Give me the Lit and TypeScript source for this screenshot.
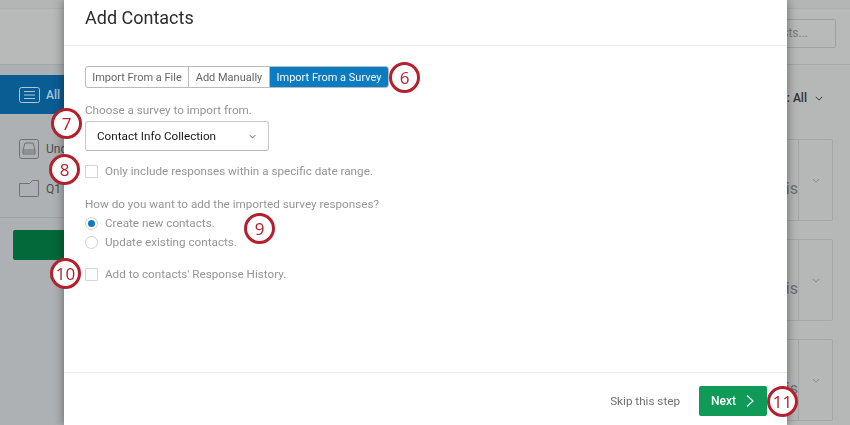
import { LitElement, html, css } from "lit";
import { customElement } from "lit/decorators.js";

const chevron = (cls: string) => html`<svg class=${cls} viewBox="0 0 10 6" fill="none" stroke="currentColor" stroke-width="1.2"><path d="M1 1l4 4 4-4"/></svg>`;

@customElement("app-root")
export class AppRoot extends LitElement {
  static styles = css`
    :host { display: block; width: 850px; height: 425px; position: relative; overflow: hidden; font-family: Roboto, "Liberation Sans", sans-serif; background: #b6b7b7; }
    .shot { width: 850px; height: 425px; position: relative; filter: blur(0.4px); }
    .page { width: 850px; height: 425px; display: flex; flex-direction: column; }
    .topstrip { height: 8px; border-bottom: 1px solid #adaeae; background: #b4b5b5; flex: none; }
    .toolbar { height: 55px; border-bottom: 1px solid #a6a7a7; flex: none; display: flex; justify-content: flex-end; align-items: center; padding-right: 14px; background: #b8b9b9; }
    .search { height: 29px; border: 1px solid #a0a1a1; border-radius: 2px; font-size: 12px; color: #7d7e7e; display: flex; align-items: center; justify-content: flex-end; padding-right: 27px; box-sizing: border-box; width: 148px; margin-bottom: 7px; }
    .main { flex: 1; display: flex; min-height: 0; }
    .side { width: 190px; background: #aeb1b3; flex: none; padding-top: 10px; box-sizing: border-box; display: flex; flex-direction: column; }
    .active { height: 39px; background: #0a5d92; color: #a9c7dc; display: flex; align-items: center; gap: 6px; padding-left: 19px; font-size: 12px; font-weight: 500; }
    .item { display: flex; align-items: center; gap: 7px; padding-left: 19px; font-size: 12px; color: #4a4b4b; height: 21px; }
    .item.first { margin-top: 24px; }
    .item.second { margin-top: 19px; }
    .sep { height: 1px; background: #9fa2a3; margin-top: 18px; }
    .newbtn { height: 30px; margin: 12px 0 0 13px; background: #04693a; border-radius: 2px; }
    .content { flex: 1; background: #b6b7b7; display: flex; flex-direction: column; align-items: flex-end; padding-right: 17px; box-sizing: border-box; }
    .filter { height: 26px; margin-top: 20px; display: flex; align-items: center; gap: 8px; font-size: 12px; font-weight: 500; color: #2f3030; margin-right: 10px; }
    .fchev { width: 8px; height: 5px; color: #333; }
    .card { width: 170px; height: 82px; flex: none; border: 1px solid #a5a6a6; border-radius: 2px; display: flex; justify-content: flex-end; box-sizing: border-box; }
    .cards { display: flex; flex-direction: column; gap: 18px; margin-top: 16px; padding-top: 12px; }
    .lis { align-self: center; font-size: 16px; color: #6e6f6f; margin: 17px 0 0 0; }
    .cell { width: 34px; border-left: 1px solid #a5a6a6; display: flex; justify-content: center; padding-top: 38px; box-sizing: border-box; }
    .cchev { width: 8px; height: 5px; color: #858686; }

    .modal { position: absolute; left: 64px; top: 0; width: 723px; height: 425px; background: #fff; box-shadow: 0 0 10px rgba(0,0,0,.45); display: flex; flex-direction: column; color: #8f9192; }
    header { flex: none; border-bottom: 1px solid #e8e9e9; padding: 0 0 10px 21px; display: flex; align-items: center; font-size: 18px; color: #2b2c2d; box-sizing: content-box; height: 35px; }
    .body { flex: 1; padding: 20px 21px 0; font-size: 11.7px; display: flex; flex-direction: column; align-items: flex-start; }
    .tabs { display: flex; height: 22px; border: 1px solid #b9bbbc; border-radius: 3px; box-sizing: border-box; font-size: 11px; color: #636566; overflow: hidden; }
    .tab { display: flex; align-items: center; justify-content: center; border-right: 1px solid #b9bbbc; box-sizing: border-box; padding-top: 1px; }
    .t1 { width: 103px; } .t2 { width: 81px; } .t3 { width: 118px; }
    .tab.on { background: #0b7cc2; color: #f2f8fc; border-right: 0; }
    .label { margin-top: 15px; height: 14px; line-height: 14px; color: #939596; }
    .select { margin-top: 4px; width: 184px; height: 30px; border: 1px solid #c6c8c9; border-bottom-color: #b5b7b8; border-radius: 3px; box-sizing: border-box; display: flex; align-items: center; justify-content: space-between; padding: 0 11px; color: #161718; font-size: 11.7px; }
    .schev { width: 7px; height: 5px; color: #444; margin-right: 1px; }
    .check { display: flex; align-items: center; gap: 7px; height: 14px; color: #939596; }
    .box { width: 13px; height: 13px; border: 1px solid #d4d5d6; box-sizing: border-box; border-radius: 1px; flex: none; }
    .c1 { margin-top: 13px; }
    .q { margin-top: 19px; height: 14px; line-height: 14px; color: #939596; }
    .radio { display: flex; align-items: center; gap: 7px; height: 14px; color: #939596; margin-top: 5px; }
    .dot { width: 13px; height: 13px; border-radius: 50%; border: 1px solid #d0d1d2; box-sizing: border-box; flex: none; display: flex; align-items: center; justify-content: center; }
    .dot i { width: 7px; height: 7px; border-radius: 50%; background: #0b7cc2; display: block; }
    .c2 { margin-top: 18px; }
    footer { height: 53px; padding-top: 4px; box-sizing: border-box; flex: none; border-top: 1px solid #e8e9e9; display: flex; align-items: center; justify-content: flex-end; padding-right: 20px; gap: 19px; font-size: 11.7px; color: #6e7071; }
    .next { width: 68px; height: 30px; background: #0f9b57; color: #fff; border-radius: 2px; display: flex; align-items: center; padding-left: 12px; gap: 10px; box-sizing: border-box; font-weight: 500; font-size: 12px; }
    .next svg { width: 8px; height: 12px; }

    .badge { position: absolute; width: 31px; height: 31px; border: 3px solid #b4202e; border-radius: 50%; background: #fff; color: #b4202e; display: flex; align-items: center; justify-content: center; font-size: 17px; box-sizing: border-box; font-family: "Open Sans", sans-serif; }
  `;

  render() {
    return html`
      <div class="shot">
      <div class="page">
        <div class="topstrip"></div>
        <div class="toolbar"><div class="search">sts...</div></div>
        <div class="main">
          <div class="side">
            <div class="active">
              <svg width="21" height="16" viewBox="0 0 21 16" fill="none" stroke="#a9c7dc"><rect x=".5" y=".5" width="20" height="15" rx="2"/><path d="M5 4.5h11M5 8h11M5 11.5h11"/></svg>
              <span>All</span>
            </div>
            <div class="item first">
              <svg width="20" height="20" viewBox="0 0 20 20" fill="none" stroke="#6f7172"><rect x=".5" y=".5" width="19" height="19" rx="2"/><path d="M4 11l2-7h8l2 7zM4 11v4h12v-4M4 13h12"/></svg>
              <span>Und</span>
            </div>
            <div class="item second">
              <svg width="20" height="17" viewBox="0 0 20 17" fill="none" stroke="#6f7172"><path d="M.5 3.5v12a1 1 0 001 1h17a1 1 0 001-1V.5h-6l-3 3z"/></svg>
              <span>Q1</span>
            </div>
            <div class="sep"></div>
            <div class="newbtn"></div>
          </div>
          <div class="content">
            <div class="filter">v: All ${chevron("fchev")}</div>
            <div class="cards">
              ${[0, 1, 2].map(() => html`<div class="card"><span class="lis">Lis</span><div class="cell">${chevron("cchev")}</div></div>`)}
            </div>
          </div>
        </div>
      </div>

      <div class="modal">
        <header>Add Contacts</header>
        <div class="body">
          <div class="tabs">
            <div class="tab t1">Import From a File</div>
            <div class="tab t2">Add Manually</div>
            <div class="tab on t3">Import From a Survey</div>
          </div>
          <div class="label">Choose a survey to import from.</div>
          <div class="select"><span>Contact Info Collection</span>${chevron("schev")}</div>
          <div class="check c1"><span class="box"></span>Only include responses within a specific date range.</div>
          <div class="q">How do you want to add the imported survey responses?</div>
          <div class="radio"><span class="dot"><i></i></span>Create new contacts.</div>
          <div class="radio"><span class="dot"></span>Update existing contacts.</div>
          <div class="check c2"><span class="box"></span>Add to contacts' Response History.</div>
        </div>
        <footer>
          <span>Skip this step</span>
          <div class="next">Next <svg viewBox="0 0 8 12" fill="none" stroke="#fff" stroke-width="1.1"><path d="M1 .5L7 6 1 11.5"/></svg></div>
        </footer>
      </div>

      <div class="badge" style="left:389px;top:62px">6</div>
      <div class="badge" style="left:51px;top:108px">7</div>
      <div class="badge" style="left:49px;top:154px">8</div>
      <div class="badge" style="left:244px;top:213px">9</div>
      <div class="badge" style="left:50px;top:258px">10</div>
      <div class="badge" style="left:767px;top:386px">11</div>
      </div>
    `;
  }
}
